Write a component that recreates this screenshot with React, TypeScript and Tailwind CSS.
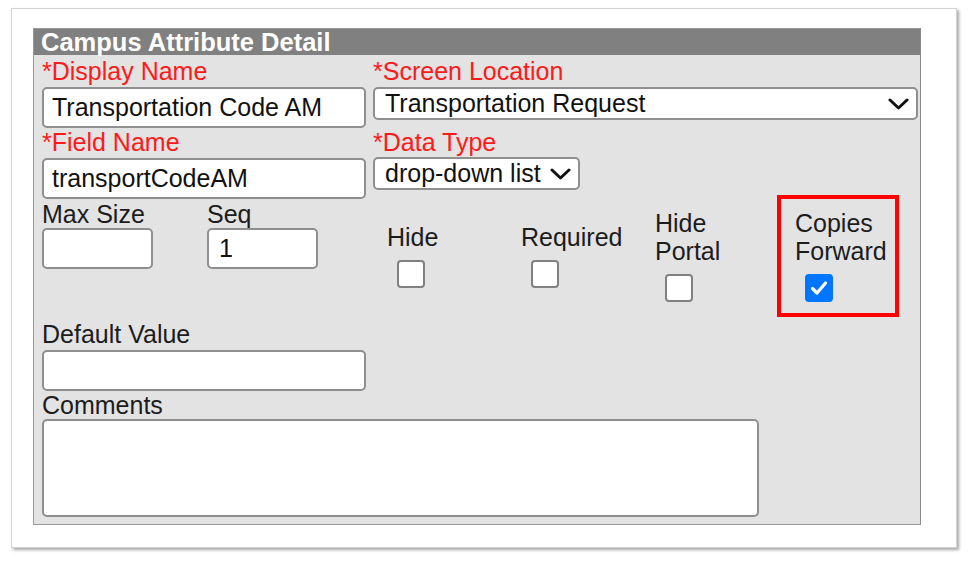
import React from 'react';

const FONT = { fontFamily: '"Liberation Sans", Arial, sans-serif' };

const Chevron = () => (
  <svg width="21" height="12" viewBox="0 0 21 12" fill="none">
    <polyline points="2,2 10.5,10 19,2" stroke="#111" strokeWidth="3" strokeLinecap="round" strokeLinejoin="round" />
  </svg>
);

const Box = ({ checked }: { checked?: boolean }) =>
  checked ? (
    <div className="w-[28px] h-[28px] rounded-[4px] bg-[#0075ff] flex items-center justify-center">
      <svg width="18" height="16" viewBox="0 0 18 16" fill="none">
        <polyline points="2.5,8.5 7,13 15.5,3" stroke="#fff" strokeWidth="3.2" strokeLinecap="round" strokeLinejoin="round" />
      </svg>
    </div>
  ) : (
    <div className="w-[28px] h-[28px] rounded-[4px] bg-white border-2 border-[#808080]" />
  );

const Label = ({ text, red }: { text: string; red?: boolean }) => (
  <div className={`h-[28px] leading-[28px] text-[25px] whitespace-nowrap ${red ? 'text-[#ff1a1a]' : 'text-[#1c1c1c]'}`}>{text}</div>
);

const TextBox = ({ value, className }: { value?: string; className: string }) => (
  <div className={`h-[41px] bg-white border-2 border-[#8f8f8f] rounded-[5px] pl-[8px] flex items-center text-[25px] text-[#111] ${className}`}>
    {value}
  </div>
);

const Select = ({ value, className }: { value: string; className: string }) => (
  <div className={`h-[33px] bg-white border-2 border-[#8f8f8f] rounded-[5px] pl-[10px] pr-[7px] flex items-center justify-between text-[25px] text-[#111] ${className}`}>
    <span>{value}</span>
    <Chevron />
  </div>
);

const CheckCell = ({ lines, checked, width }: { lines: string[]; checked?: boolean; width: string }) => (
  <div className={`${width} flex flex-col`}>
    {lines.map(l => (
      <Label key={l} text={l} />
    ))}
    <div className="mt-[9px] ml-[10px]">
      <Box checked={checked} />
    </div>
  </div>
);

export default function App() {
  return (
    <div className="w-[968px] h-[563px] bg-white pt-[8px] pl-[11px]" style={FONT}>
      <div className="w-[946px] h-[540px] bg-white border border-[#d2d2d2] shadow-[2px_2px_3px_rgba(0,0,0,0.35)] pl-[21px] pt-[19px]">
        <div className="w-[888px] h-[497px] bg-[#e3e3e3] border border-[#9a9a9a] border-r-[#8a8a8a] flex flex-col">
          {/* header */}
          <div className="h-[26px] bg-[#808080] text-white font-bold text-[25.5px] leading-[26px] pl-[7px] whitespace-nowrap">Campus Attribute Detail</div>

          <div className="pl-[8px] pt-[2px] flex flex-col">
            {/* row 1 */}
            <div className="flex gap-[7px]">
              <div className="w-[324px]">
                <Label text="*Display Name" red />
                <TextBox value="Transportation Code AM" className="mt-[2px] w-[324px]" />
              </div>
              <div>
                <Label text="*Screen Location" red />
                <Select value="Transportation Request" className="mt-[2px] w-[545px]" />
              </div>
            </div>

            {/* row 2 */}
            <div className="flex gap-[7px]">
              <div className="w-[324px]">
                <Label text="*Field Name" red />
                <TextBox value="transportCodeAM" className="mt-[2px] w-[324px]" />
              </div>
              <div>
                <Label text="*Data Type" red />
                <Select value="drop-down list" className="mt-[1px] w-[207px]" />
              </div>
            </div>

            {/* row 3 */}
            <div className="flex items-center h-[112px]">
              <div className="w-[165px] self-start pt-[1px]">
                <Label text="Max Size" />
                <TextBox className="w-[111px]" />
              </div>
              <div className="w-[180px] self-start pt-[1px]">
                <Label text="Seq" />
                <TextBox value="1" className="w-[111px] pl-[10px]" />
              </div>
              <CheckCell lines={['Hide']} width="w-[134px]" />
              <CheckCell lines={['Required']} width="w-[134px]" />
              <CheckCell lines={['Hide', 'Portal']} width="w-[122px]" />
              <div className="relative w-[122px] pl-[18px]">
                <CheckCell lines={['Copies', 'Forward']} checked width="w-[104px]" />
                <div className="absolute left-0 top-[-14px] w-[122px] h-[122px] border-[4px] border-[#ff0000]" />
              </div>
            </div>

            {/* default value */}
            <div className="mt-[9px]">
              <Label text="Default Value" />
              <TextBox className="mt-[2px] w-[324px]" />
            </div>
            <div>
              <Label text="Comments" />
              <div className="w-[717px] h-[98px] bg-white border-2 border-[#8f8f8f] rounded-[5px]" />
            </div>
          </div>
        </div>
      </div>
    </div>
  );
}
